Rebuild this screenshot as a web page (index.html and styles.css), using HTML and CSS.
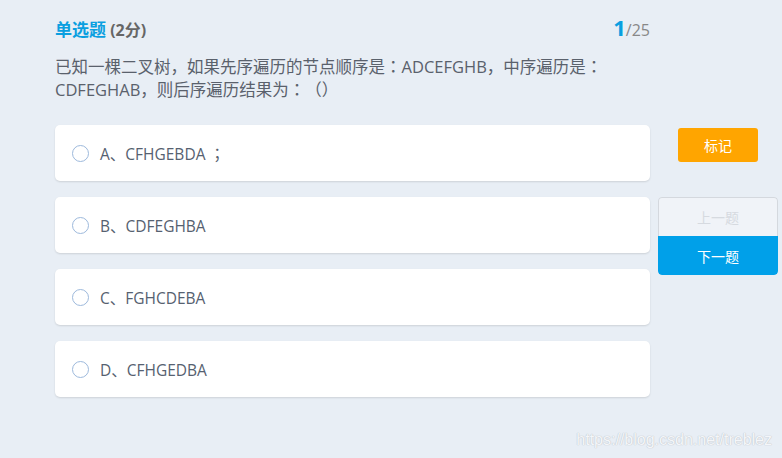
FILE: index.html
```html
<!DOCTYPE html>
<html lang="zh">
<head>
<meta charset="utf-8">
<link rel="stylesheet" href="styles.css">
</head>
<body>
<div class="page">
  <div class="main">
    <div class="head">
      <div class="title"><span class="type">单选题</span> <span class="score">(2分)</span></div>
      <div class="count"><span class="cur">1</span>/25</div>
    </div>
    <p class="question">已知一棵二叉树，如果先序遍历的节点顺序是：ADCEFGHB，中序遍历是：CDFEGHAB，则后序遍历结果为：（）</p>
    <div class="options">
      <label class="option"><span class="radio"></span><span class="text">A、CFHGEBDA ；</span></label>
      <label class="option"><span class="radio"></span><span class="text">B、CDFEGHBA</span></label>
      <label class="option"><span class="radio"></span><span class="text">C、FGHCDEBA</span></label>
      <label class="option"><span class="radio"></span><span class="text">D、CFHGEDBA</span></label>
    </div>
  </div>
  <div class="side">
    <button class="mark">标记</button>
    <div class="nav">
      <button class="prev">上一题</button>
      <button class="next">下一题</button>
    </div>
  </div>
</div>
<div class="watermark">https://blog.csdn.net/treblez</div>
</body>
</html>
```
FILE: styles.css
```css
html, body {
  margin: 0;
  padding: 0;
  background: #e8eef5;
  height: 100%;
}
body {
  font-family: "Open Sans", "Noto Sans CJK SC", sans-serif;
  color: #5a616c;
  position: relative;
  overflow: hidden;
}
.page {
  display: flex;
  padding: 12px 0 0 55px;
}
.main {
  width: 595px;
}
.head {
  display: flex;
  justify-content: space-between;
  align-items: baseline;
  height: 30px;
}
.title {
  font-weight: bold;
  font-size: 16px;
}
.type {
  color: #0a9fe0;
  font-size: 17px;
}
.score {
  color: #666;
}
.count {
  color: #888;
  font-size: 16px;
}
.cur {
  color: #0a9fe0;
  font-size: 22px;
  font-weight: bold;
}
.question {
  margin: 13px 0 0;
  font-family: "Open Sans", "Noto Sans CJK JP", sans-serif;
  font-feature-settings: "locl" 0;
  text-spacing-trim: space-all;
  font-size: 16.5px;
  line-height: 23px;
  color: #5a616c;
}
.options {
  display: flex;
  flex-direction: column;
  gap: 16px;
  margin-top: 24px;
}
.option {
  display: flex;
  align-items: center;
  height: 56px;
  background: #fff;
  border-radius: 5px;
  box-shadow: 0 1px 2px rgba(0,0,0,0.12);
  padding-left: 17px;
  box-sizing: border-box;
}
.radio {
  width: 17px;
  height: 17px;
  box-sizing: border-box;
  border: 1.8px solid #9db9dc;
  border-radius: 50%;
  margin-right: 11px;
}
.text {
  font-family: "Open Sans", "Noto Sans CJK JP", sans-serif;
  font-feature-settings: "locl" 0;
  text-spacing-trim: space-all;
  font-size: 15.5px;
  color: #566170;
}
.side {
  width: 120px;
  margin-left: 8px;
  display: flex;
  flex-direction: column;
  align-items: center;
  padding-top: 116px;
}
button {
  font-family: "Open Sans", "Noto Sans CJK SC", sans-serif;
  font-size: 14px;
  border: none;
  cursor: pointer;
}
.mark {
  width: 80px;
  height: 34px;
  background: #ffa500;
  color: #fff;
  border-radius: 3px;
}
.nav {
  margin-top: 35px;
  width: 120px;
  display: flex;
  flex-direction: column;
  border-radius: 4px;
  overflow: hidden;
}
.prev {
  height: 39px;
  background: #f0f3f8;
  color: #d6dae0;
  border: 1px solid #d4d8de;
  border-bottom: none;
  border-radius: 4px 4px 0 0;
}
.next {
  height: 39px;
  background: #00a0e9;
  color: #fff;
  border-radius: 0 0 4px 4px;
}
.watermark {
  position: absolute;
  right: 10px;
  bottom: 9px;
  font-family: "Liberation Sans", Arial, sans-serif;
  font-size: 16px;
  color: #f4f6f9;
  text-shadow: 0 0 1px #bfc4cb, 0 0 1px #bfc4cb;
}
```
